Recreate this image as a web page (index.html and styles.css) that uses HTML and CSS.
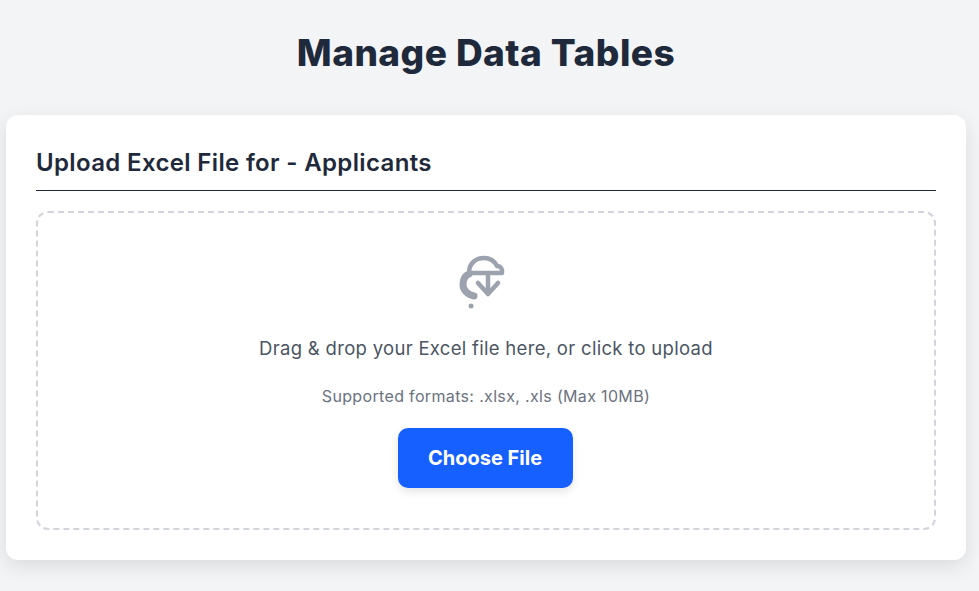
FILE: index.html
```html
<!DOCTYPE html>
<html>
<head>
    <meta charset="utf-8">
    <link rel="stylesheet" href="styles.css">
    <title>Manage Data Tables</title>
</head>
<body>
    <h1 class="title">Manage Data Tables</h1>

    <div class="card">
        <h2 class="card-title">Upload Excel File for - Applicants</h2>

        <div class="dropzone">
            <svg class="upload-icon" width="50" height="56" viewBox="0 0 50 56" fill="none" stroke="#9ca3af" stroke-width="4.5" stroke-linecap="round" stroke-linejoin="round">
                <path d="M11 18C11 8 18 3 26 3C33 3 37 7 39 11C43 11 45 15 44 18H11"/>
                <path d="M11 19C6 21 5 25 5 30C5 35 10 40 16 41" stroke-width="7"/>
                <path d="M30 18V38"/>
                <path d="M20 28L30 39L40 28"/>
                <circle cx="13" cy="51" r="2.5" fill="#9ca3af" stroke="none"/>
            </svg>
            <p class="drop-text">Drag &amp; drop your Excel file here, or click to upload</p>
            <p class="drop-note">Supported formats: .xlsx, .xls (Max 10MB)</p>
            <button class="choose-btn">Choose File</button>
        </div>
    </div>
</body>
</html>
```

FILE: styles.css
```css
body{
    margin: 0;
    padding: 0 13px 31px 6px;
    background-color: #f3f4f6;
    font-family: Inter, "Liberation Sans", sans-serif;
    color: #1e293b;
}

.title{
    margin: 0;
    padding-top: 31px;
    height: 115px;
    box-sizing: border-box;
    text-align: center;
    font-size: 37px;
    line-height: 44px;
    font-weight: 800;
    letter-spacing: 0.45px;
}

.card{
    background-color: white;
    border-radius: 12px;
    padding: 30px;
    box-shadow: 0 6px 20px rgba(0, 0, 0, 0.1);
}

.card-title{
    margin: 0 0 20px 0;
    height: 46px;
    box-sizing: border-box;
    border-bottom: 1px solid #1e293b;
    font-size: 24px;
    line-height: 35px;
    font-weight: 600;
    letter-spacing: 0.35px;
}

.dropzone{
    height: 319px;
    box-sizing: border-box;
    border: 2px dashed #d1d5db;
    border-radius: 12px;
    display: flex;
    flex-direction: column;
    align-items: center;
    padding-top: 42px;
}

.upload-icon{
    display: block;
    margin-left: -7px;
}

.drop-text{
    margin: 23px 0 0 0;
    font-size: 18.5px;
    line-height: 28px;
    color: #4b5563;
    letter-spacing: 0.3px;
}

.drop-note{
    margin: 23px 0 0 0;
    font-size: 16px;
    line-height: 22px;
    color: #6b7280;
    letter-spacing: 0.34px;
}

.choose-btn{
    margin: 21px 2px 0 0;
    width: 175px;
    height: 60px;
    background-color: #1560ff;
    color: white;
    border: none;
    border-radius: 10px;
    font-family: Inter, "Liberation Sans", sans-serif;
    font-size: 20px;
    font-weight: 700;
    box-shadow: 0 4px 8px rgba(0, 0, 0, 0.1);
    cursor: pointer;
}
```
